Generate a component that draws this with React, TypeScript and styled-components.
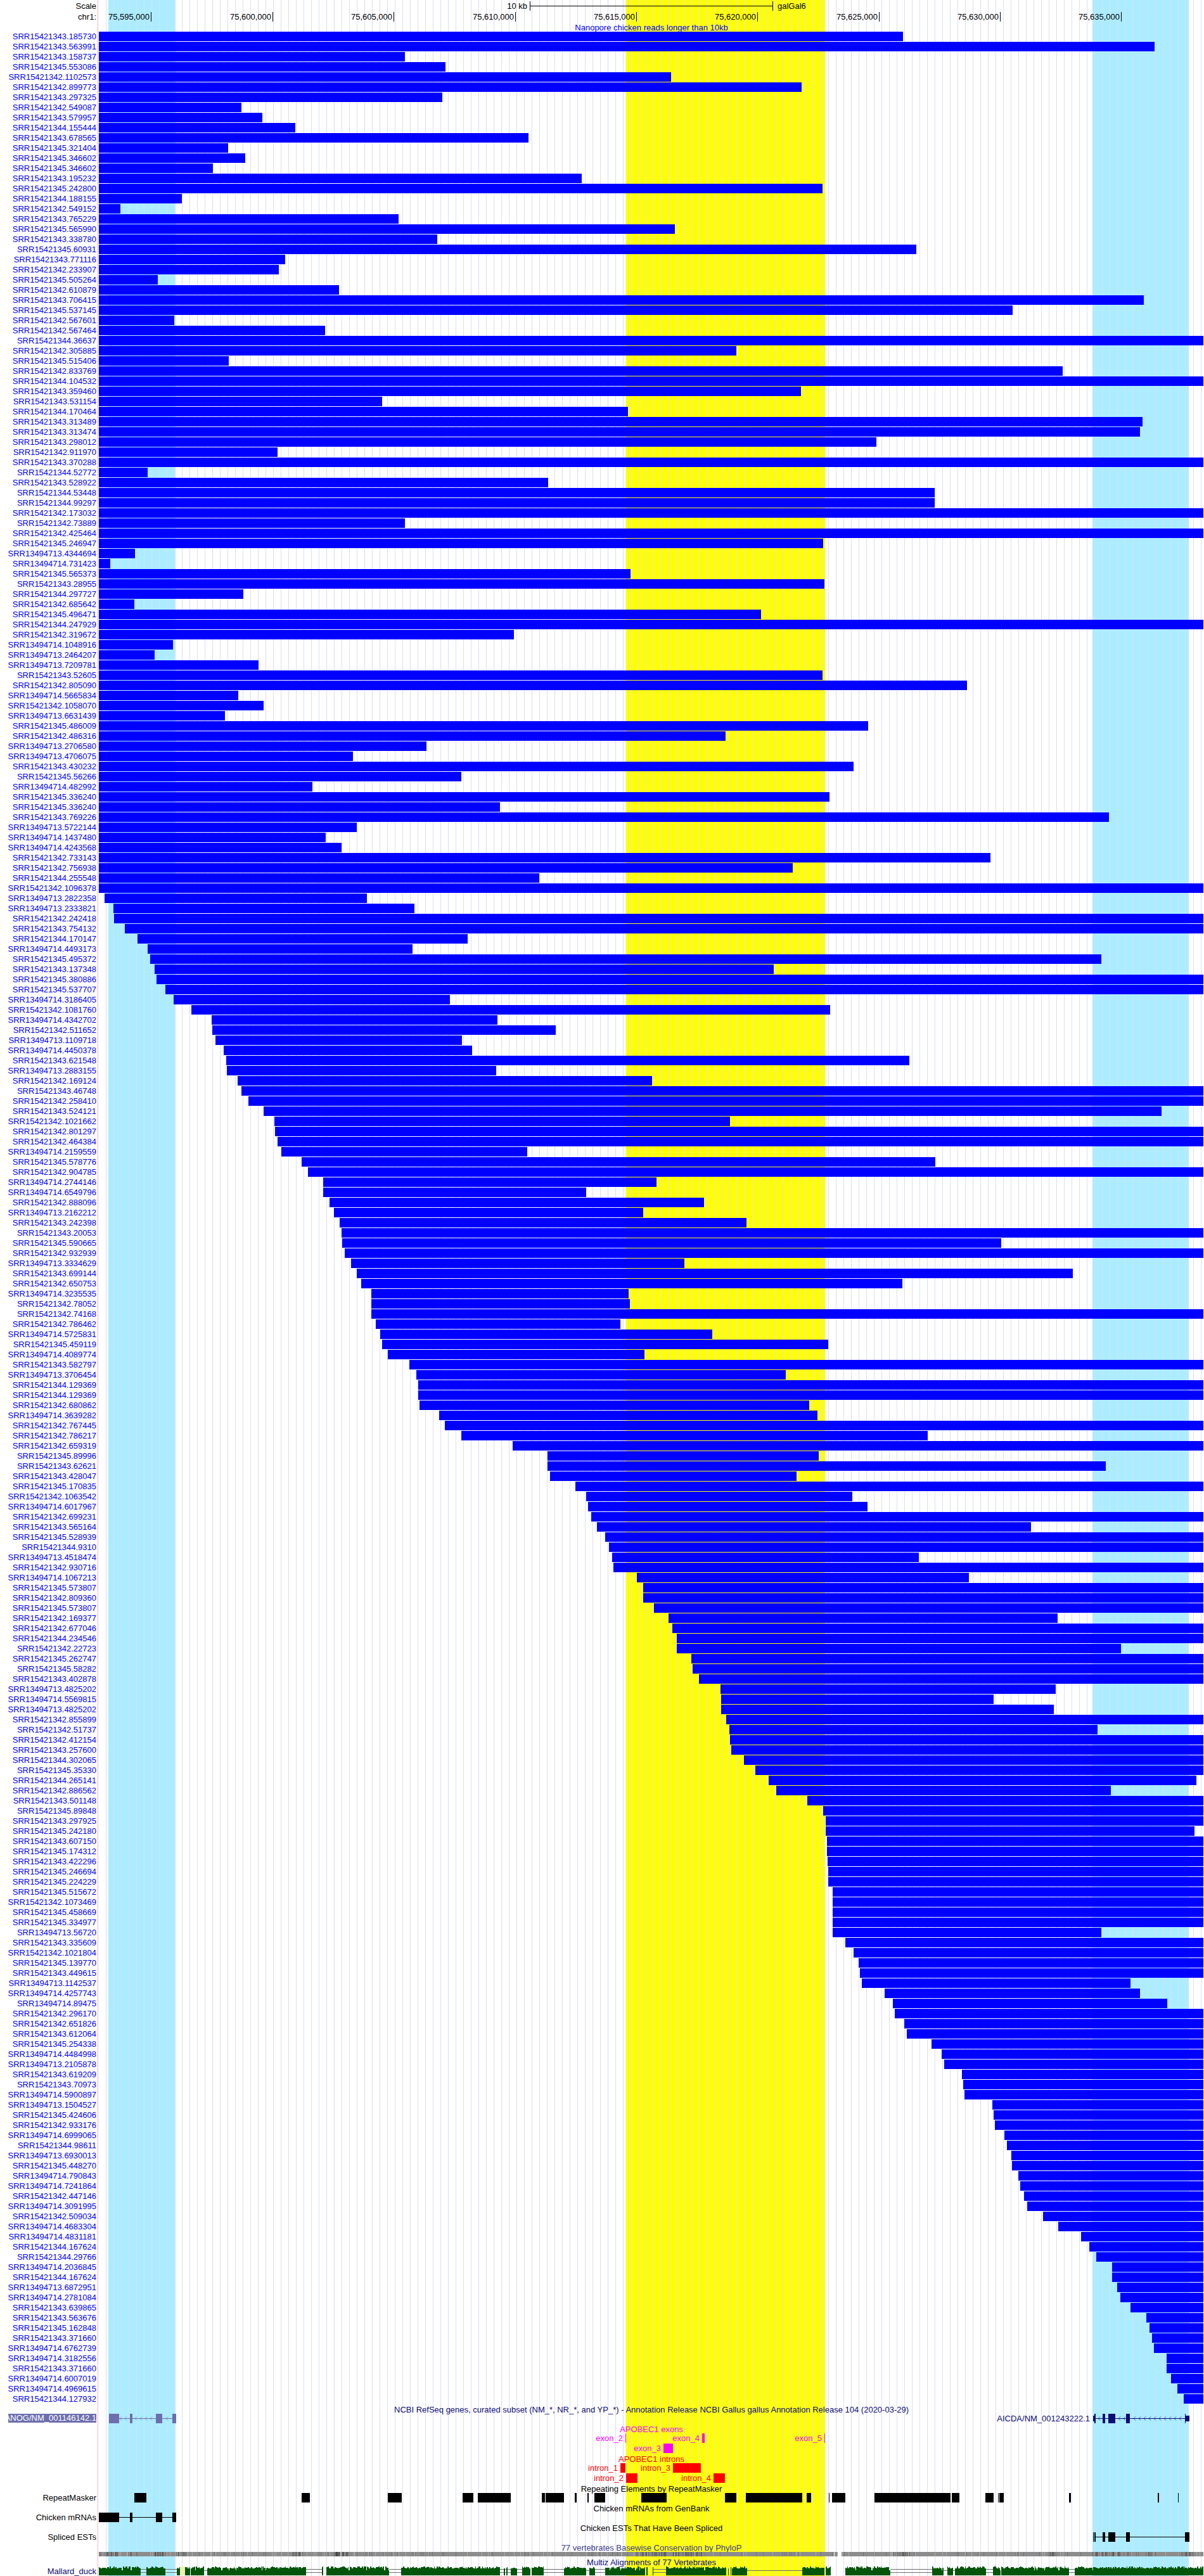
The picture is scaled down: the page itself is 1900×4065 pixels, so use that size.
import React from "react";
import styled, { createGlobalStyle } from "styled-components";

/* The plot is drawn on a 1744 unit wide axis that begins at unit 156. */
const AXIS_START = 156;
const AXIS_SPAN = 1744;
const AXIS_LAST = 1899;
/* Read extents are stored in coarser columns than the axis units. */
const READ_COLUMN = 1900 / 1568;

const percent = (x: number) => `${((x - AXIS_START) / AXIS_SPAN) * 100}%`;
const percentSpan = (w: number) => `${(w / AXIS_SPAN) * 100}%`;

const READS = `
SRR15421343.185730 0 1176
SRR15421343.563991 0 1504
SRR15421343.158737 0 527
SRR15421345.553086 0 580
SRR15421342.1102573 0 874
SRR15421342.899773 0 1044
SRR15421343.297325 0 576
SRR15421342.549087 0 314.4
SRR15421343.579957 0 341.7
SRR15421344.155444 0 384.6
SRR15421343.678565 0 688
SRR15421345.321404 0 297.1
SRR15421345.346602 0 319.4
SRR15421345.346602 0 277.3
SRR15421343.195232 0 758
SRR15421345.242800 0 1071
SRR15421344.188155 0 236.9
SRR15421342.549152 0 156.8
SRR15421343.765229 0 519
SRR15421345.565990 0 879
SRR15421343.338780 0 569.5
SRR15421345.60931 0 1193
SRR15421343.771116 0 371.4
SRR15421342.233907 0 363.1
SRR15421345.505264 0 205.5
SRR15421342.610879 0 441.5
SRR15421343.706415 0 1490
SRR15421345.537145 0 1319
SRR15421342.567601 0 227
SRR15421342.567464 0 423
SRR15421344.36637 0 1568
SRR15421342.305885 0 959
SRR15421345.515406 0 298
SRR15421342.833769 0 1384
SRR15421344.104532 0 1568
SRR15421343.359460 0 1043
SRR15421343.531154 0 498
SRR15421344.170464 0 818
SRR15421343.313489 0 1488
SRR15421343.313474 0 1485
SRR15421343.298012 0 1141
SRR15421342.911970 0 361.5
SRR15421343.370288 0 1568
SRR15421344.52772 0 192.3
SRR15421343.528922 0 714
SRR15421344.53448 0 1217
SRR15421344.99297 0 1217
SRR15421342.173032 0 1568
SRR15421342.73889 0 527
SRR15421342.425464 0 1568
SRR15421345.246947 0 1072
SRR13494713.4344694 0 175.8
SRR13494714.731423 0 143.6
SRR15421345.565373 0 821
SRR15421343.28955 0 1074
SRR15421344.297727 0 317
SRR15421342.685642 0 175
SRR15421345.496471 0 991
SRR15421344.247929 0 1568
SRR15421342.319672 0 669
SRR13494714.1048916 0 225.3
SRR13494713.2464207 0 201.4
SRR13494713.7209781 0 336.7
SRR15421343.52605 0 1071
SRR15421342.805090 0 1259
SRR13494714.5665834 0 310.3
SRR15421342.1058070 0 343.3
SRR13494713.6631439 0 293
SRR15421345.486009 0 1131
SRR15421342.486316 0 945
SRR13494713.2706580 0 555
SRR13494713.4706075 0 460
SRR15421343.430232 0 1112
SRR15421345.56266 0 601
SRR13494714.482992 0 407
SRR15421345.336240 0 1080
SRR15421345.336240 0 651
SRR15421343.769226 0 1444
SRR13494713.5722144 0 465
SRR13494714.1437480 0 424
SRR13494714.4243568 0 445
SRR15421342.733143 0 1290
SRR15421342.756938 0 1032
SRR15421344.255548 0 702
SRR15421342.1096378 0 1568
SRR13494713.2822358 136.2 478
SRR13494713.2333821 147.7 540
SRR15421342.242418 148.6 1568
SRR15421343.754132 162.6 1568
SRR15421344.170147 179.1 609
SRR13494714.4493173 192.3 537
SRR15421345.495372 195.6 1434
SRR15421343.137348 201.4 1008
SRR15421345.380886 203.8 1568
SRR15421345.537707 215.4 1568
SRR13494714.3186405 226.1 586
SRR15421342.1081760 249.2 1081
SRR13494714.4342702 275.6 648
SRR15421342.511652 276.5 724
SRR13494713.1109718 280.6 602
SRR13494714.4450378 291.3 615
SRR15421343.621548 294.6 1184
SRR13494713.2883155 295.5 646
SRR15421342.169124 309.5 849
SRR15421343.46748 314.4 1568
SRR15421342.258410 323.5 1568
SRR15421343.524121 343.3 1513
SRR15421342.1021662 357.3 951
SRR15421342.801297 358.2 1568
SRR15421342.464384 361.5 1568
SRR13494714.2159559 366.4 687
SRR15421345.578776 392.8 1218
SRR15421342.904785 401 1568
SRR13494714.2744146 421 855
SRR13494714.6549796 421 763
SRR15421342.888096 429 917
SRR13494713.2162212 435 838
SRR15421343.242398 442 972
SRR15421343.20053 445 1568
SRR15421345.590665 446 1304
SRR15421342.932939 449 1568
SRR13494713.3334629 457 891
SRR15421343.699144 465 1397
SRR15421342.650753 470 1175
SRR13494714.3235535 484 819
SRR15421342.78052 484 820
SRR15421342.74168 484 1568
SRR15421342.786462 489 808
SRR13494714.5725831 495 928
SRR15421345.459119 498 1079
SRR13494714.4089774 505 839
SRR15421343.582797 533 1568
SRR13494713.3706454 542 1023
SRR15421344.129369 545 1568
SRR15421344.129369 545 1568
SRR15421342.680862 546 1054
SRR13494714.3639282 572 1065
SRR15421342.767445 579 1568
SRR15421342.786217 601 1208
SRR15421342.659319 668 1568
SRR15421345.89996 713 1066
SRR15421343.62621 713 1440
SRR15421343.428047 716 1037
SRR15421345.170835 749 1568
SRR15421342.1063542 763 1110
SRR13494714.6017967 766 1130
SRR15421342.699231 770 1568
SRR15421343.565164 777 1343
SRR15421345.528939 788 1568
SRR15421344.9310 793 1568
SRR13494713.4518474 797 1197
SRR15421342.930716 799 1568
SRR13494714.1067213 829 1262
SRR15421345.573807 838 1568
SRR15421342.809360 838 1568
SRR15421345.573807 852 1568
SRR15421342.169377 871 1377
SRR15421342.677046 876 1568
SRR15421344.234546 881 1568
SRR15421342.22723 881 1460
SRR15421345.262747 900 1568
SRR15421345.58282 902 1568
SRR15421343.402878 910 1568
SRR13494713.4825202 938 1375
SRR13494714.5569815 939 1294
SRR13494713.4825202 939 1372
SRR15421342.855899 946 1568
SRR15421342.51737 950 1429
SRR15421342.412154 951 1568
SRR15421343.257600 952 1568
SRR15421344.302065 969 1568
SRR15421345.35330 984 1568
SRR15421344.265141 1001 1558
SRR15421342.886562 1011 1447
SRR15421343.501148 1051 1568
SRR15421345.89848 1072 1568
SRR15421343.297925 1075 1568
SRR15421345.242180 1075 1556
SRR15421343.607150 1077 1568
SRR15421345.174312 1077 1568
SRR15421343.422296 1078 1568
SRR15421345.246694 1079 1568
SRR15421345.224229 1079 1568
SRR15421345.515672 1084 1568
SRR15421342.1073469 1084 1568
SRR15421345.458669 1084 1568
SRR15421345.334977 1084 1568
SRR13494713.56720 1084 1434
SRR15421343.335609 1101 1568
SRR15421342.1021804 1112 1568
SRR15421345.139770 1118 1568
SRR15421343.449615 1120 1568
SRR13494713.1142537 1122 1472
SRR13494714.4257743 1152 1485
SRR13494714.89475 1163 1520
SRR15421342.296170 1165 1568
SRR15421342.651826 1178 1568
SRR15421343.612064 1181 1568
SRR15421345.254338 1213 1568
SRR13494714.4484998 1226 1568
SRR13494713.2105878 1230 1568
SRR15421343.619209 1253 1568
SRR15421343.70973 1254 1568
SRR13494714.5900897 1256 1568
SRR13494713.1504527 1292 1568
SRR15421345.424606 1294 1568
SRR15421342.933176 1296 1568
SRR13494714.6999065 1308 1568
SRR15421344.98611 1311 1568
SRR13494713.6930013 1317 1568
SRR15421345.448270 1318 1568
SRR13494714.790843 1326 1568
SRR13494714.7241864 1329 1568
SRR15421342.447146 1334 1568
SRR13494714.3091995 1338 1568
SRR15421342.509034 1358 1568
SRR13494714.4683304 1378 1568
SRR13494714.4831181 1408 1568
SRR15421344.167624 1419 1568
SRR15421344.29766 1428 1568
SRR13494714.2036845 1448 1568
SRR15421344.167624 1448 1568
SRR13494713.6872951 1455 1568
SRR13494714.2781084 1459 1568
SRR15421343.639865 1472 1568
SRR15421343.563676 1493 1568
SRR15421345.162848 1497 1568
SRR15421343.371660 1500 1568
SRR13494714.6762739 1503 1568
SRR13494714.3182556 1519 1568
SRR15421343.371660 1519 1568
SRR13494714.6007019 1525 1568
SRR13494714.4969615 1533 1568
SRR15421344.127932 1542 1568
`
  .trim()
  .split("\n")
  .map((line) => {
    const [name, from, to] = line.split(" ");
    return {
      name,
      from: Math.max(AXIS_START, Math.round(Number(from) * READ_COLUMN)),
      to: Math.min(AXIS_LAST, Math.round(Number(to) * READ_COLUMN)),
    };
  });

type Box = [from: number, to: number];

const TICKS: [number, string][] = [
  [238, "75,595,000"],
  [430, "75,600,000"],
  [621, "75,605,000"],
  [813, "75,610,000"],
  [1004, "75,615,000"],
  [1195, "75,620,000"],
  [1387, "75,625,000"],
  [1578, "75,630,000"],
  [1769, "75,635,000"],
];

const REPEATS: Box[] = [
  [212, 231], [476, 489], [612, 634], [730, 747], [754, 806], [855, 860],
  [861, 890], [907, 910], [927, 929], [938, 955], [1012, 1052], [1144, 1162],
  [1177, 1266], [1273, 1280], [1308, 1309], [1313, 1334], [1380, 1500],
  [1502, 1514], [1555, 1568], [1575, 1576], [1577, 1584], [1687, 1690],
  [1827, 1829], [1859, 1860],
];

const ALIGNED: Box[] = [
  [156, 222], [231, 261], [279, 284], [292, 300], [301, 322], [327, 483],
  [508, 510], [515, 614], [633, 789], [795, 797], [799, 801], [806, 816],
  [824, 837], [839, 858], [890, 925], [930, 939], [955, 1018], [1020, 1022],
  [1030, 1031], [1051, 1146], [1149, 1150], [1153, 1154], [1155, 1179],
  [1266, 1301], [1303, 1311], [1334, 1405], [1471, 1489], [1495, 1504],
  [1507, 1556], [1567, 1579], [1580, 1687], [1696, AXIS_LAST],
];

const DOUBLE_GAPS: Box[] = [
  [222, 231], [261, 279], [483, 508], [614, 633], [789, 806], [816, 824],
  [858, 890], [939, 955], [1031, 1051], [1405, 1471], [1556, 1567],
  [1687, 1696],
];
const SINGLE_GAPS: Box[] = [
  [322, 327], [925, 930], [1179, 1266], [1489, 1495], [1504, 1507],
];

/* Spans where the conservation strip carries many dark columns. */
const CONSERVED: Box[] = [
  [168, 188], [204, 209], [244, 262], [278, 300], [462, 476], [527, 552],
  [1005, 1052], [1062, 1110], [1200, 1206], [1408, 1436], [1655, 1667],
  [1724, 1768], [1776, 1792], [1812, 1824], [1864, 1884],
];

const NANOG: Box[] = [[172, 188], [205, 209], [246, 256], [272, 278]];
const AICDA: Box[] = [[1727, 1729], [1740, 1744], [1749, 1760], [1777, 1783], [1870, 1871]];
const MRNAS: Box[] = [[156, 188], [205, 209], [246, 256], [272, 278]];
const ESTS: Box[] = [[1725, 1726], [1727, 1729], [1740, 1744], [1749, 1760], [1777, 1783], [1870, 1877]];

const randomFrom = (seed: number) => {
  let state = seed;
  return () => {
    state = (state * 16807) % 2147483647;
    return state / 2147483647;
  };
};

const conservationColumns = () => {
  const random = randomFrom(77);
  const columns: { x: number; fill: string }[] = [];
  for (let x = AXIS_START; x < AXIS_LAST; x += 1) {
    const dense = CONSERVED.some(([a, b]) => x >= a && x < b);
    const draw = random();
    const tone = random();
    if (dense && draw < 0.5) {
      columns.push({ x, fill: tone < 0.2 ? "#464646" : tone < 0.6 ? "#646464" : "#787878" });
    } else if (draw < 0.06) {
      columns.push({ x, fill: "#747474" });
    } else if (draw > 0.93) {
      columns.push({ x, fill: "#aaaaaa" });
    }
  }
  return columns;
};

const alignmentPath = () => {
  const random = randomFrom(4065);
  let d = "";
  ALIGNED.forEach(([from, to]) => {
    d += `M${from} 14`;
    let x = from;
    while (x < to) {
      const next = Math.min(to, x + 1 + Math.floor(random() * 2));
      const draw = random();
      const top = draw < 0.03 ? 6 : draw < 0.3 ? 3 : draw < 0.6 ? 2 : draw < 0.85 ? 1 : 0;
      d += `V${top}H${next}`;
      x = next;
    }
    d += "V14Z";
  });
  return d;
};

const Reset = createGlobalStyle`
  body { margin: 0; background: #ffffff; }
`;

const Browser = styled.main`
  display: grid;
  font: 13px/15px "Liberation Sans", Arial, Helvetica, sans-serif;
  color: #000000;
`;

const band = (color: string, from: number, to: number) =>
  `transparent ${percent(from)}, ${color} ${percent(from)}, ${color} ${percent(to)}, transparent ${percent(to)}`;

const Backdrop = styled.div`
  grid-area: 1 / 1;
  margin-left: 154px;
  padding-left: 1px;
  border-left: 1px solid #ffb4b4;
  background-image:
    linear-gradient(to right, #dcdcff 1px, transparent 1px),
    linear-gradient(
      to right,
      ${band("#aaedff", 171, 277)},
      ${band("#ffff00", 988, 1302)},
      ${band("#aaedff", 1724, 1876)}
    );
  background-size: 12px 100%, 100% 100%;
  background-position: 11px 0, 0 0;
  background-repeat: repeat-x, no-repeat;
  background-origin: content-box;
  background-clip: content-box;
`;

const Tracks = styled.div`
  grid-area: 1 / 1;
  min-width: 0;
`;

const ReadList = styled.ul`
  margin: 0;
  padding: 0;
  list-style: none;
`;

const Row = styled.div<{ $height?: number }>`
  display: grid;
  grid-template-columns: 152px minmax(0, 1fr);
  column-gap: 4px;
  height: ${(p) => p.$height ?? 16}px;
`;

const ScaleRow = styled(Row)`
  box-sizing: border-box;
  padding-top: 2px;
`;

const Label = styled.span<{ $color?: string }>`
  text-align: right;
  white-space: nowrap;
  color: ${(p) => p.$color ?? "#000000"};
`;

const GeneTag = styled.span`
  display: flex;
  justify-content: flex-end;
  height: 14px;
  margin-left: 13px;
  line-height: 14px;
  overflow: hidden;
  white-space: nowrap;
  color: #ffffff;
  background: #6e6eaf;
`;

const Title = styled.h2<{ $color?: string }>`
  height: 15px;
  margin: 0 0 0 156px;
  font: inherit;
  line-height: 17px;
  text-align: center;
  white-space: nowrap;
  color: ${(p) => p.$color ?? "#000000"};
`;

const ReadBar = styled.div`
  height: 15px;
  background: #0000ff;
`;

const Canvas = styled.div`
  position: relative;
  height: 15px;
`;

const Plot = styled.svg`
  display: block;
  width: 100%;
  height: 15px;
`;

const StripClip = styled.div`
  height: 7px;
  overflow: hidden;
`;

const Feature = styled.span<{ $color: string }>`
  position: absolute;
  top: 0;
  height: 15px;
  background: ${(p) => p.$color};
`;

const FeatureName = styled.span<{ $color: string }>`
  position: absolute;
  top: 0;
  margin-right: 4px;
  white-space: nowrap;
  color: ${(p) => p.$color};
`;

const TickName = styled(FeatureName)`
  margin-right: 2px;
`;

const TickMark = styled(Feature)`
  width: 1px;
`;

const ScaleBar = styled.span`
  position: absolute;
  top: 0;
  height: 15px;
  box-sizing: border-box;
  border: solid #000000;
  border-width: 0 1px;
  background: linear-gradient(#000000, #000000) 0 7px / 100% 1px no-repeat;
`;

const UnitName = styled.span`
  position: absolute;
  top: 0;
  margin-left: 8px;
`;

const rightOf = (x: number) => ({ right: `calc(100% - ${percent(x)})` });
const spanOf = (from: number, to: number) => ({
  left: percent(from),
  width: percentSpan(to - from),
});

const Chart = ({ label, children }: { label: string; children: React.ReactNode }) => (
  <Plot
    role="img"
    aria-label={label}
    viewBox={`${AXIS_START} 0 ${AXIS_SPAN} 15`}
    preserveAspectRatio="none"
    shapeRendering="crispEdges"
  >
    {children}
  </Plot>
);

const Boxes = ({ boxes, y = 0, h = 15, fill }: { boxes: Box[]; y?: number; h?: number; fill: string }) => (
  <>
    {boxes.map(([a, b]) => (
      <rect key={a} x={a} y={y} width={b - a} height={h} fill={fill} />
    ))}
  </>
);

const Chevrons = ({ spans, stroke }: { spans: Box[]; stroke: string }) => {
  let d = "";
  spans.forEach(([a, b]) => {
    for (let x = a; x + 4 <= b; x += 8) d += `M${x + 3} 4.5L${x} 7.5L${x + 3} 10.5`;
  });
  return <path d={d} fill="none" stroke={stroke} strokeWidth="0.7" shapeRendering="auto" />;
};

type Named = [name: string, from: number, to: number];

const FeatureRow = ({ items, color }: { items: Named[]; color: string }) => (
  <Row>
    <Label />
    <Canvas>
      {items.map(([name, from, to]) => (
        <React.Fragment key={name}>
          <FeatureName $color={color} style={rightOf(from)}>{name}</FeatureName>
          <Feature $color={color} style={spanOf(from, to)} />
        </React.Fragment>
      ))}
    </Canvas>
  </Row>
);

export default function App() {
  return (
    <>
      <Reset />
      <Browser>
        <Backdrop />
        <Tracks>
          <ScaleRow $height={19}>
            <Label>Scale</Label>
            <Canvas>
              <FeatureName $color="#000000" style={rightOf(836)}>10 kb</FeatureName>
              <ScaleBar style={spanOf(836, 1220)} />
              <UnitName style={{ left: percent(1219) }}>galGal6</UnitName>
            </Canvas>
          </ScaleRow>
          <Row>
            <Label>chr1:</Label>
            <Canvas>
              {TICKS.map(([x, name]) => (
                <React.Fragment key={name}>
                  <TickName $color="#000000" style={rightOf(x)}>{name}</TickName>
                  <TickMark $color="#000000" style={{ left: percent(x) }} />
                </React.Fragment>
              ))}
            </Canvas>
          </Row>
          <Title $color="#0000ff">Nanopore chicken reads longer than 10kb</Title>

          <ReadList>
            {READS.map((read, i) => (
              <Row as="li" key={i}>
                <Label $color="#0000ff">{read.name}</Label>
                <ReadBar
                  style={{
                    marginLeft: percent(read.from),
                    width: percentSpan(read.to - read.from),
                  }}
                />
              </Row>
            ))}
          </ReadList>

          <Title $color="#0c0c78">
            NCBI RefSeq genes, curated subset (NM_*, NR_*, and YP_*) - Annotation Release NCBI Gallus gallus Annotation Release 104 (2020-03-29)
          </Title>
          <Row>
            <GeneTag>NANOG/NM_001146142.1</GeneTag>
            <Canvas>
              <Chart label="RefSeq genes">
                <Boxes boxes={[[188, 272]]} y={7} h={1} fill="#6e6eaf" />
                <Chevrons spans={[[189, 204], [213, 245], [262, 272]]} stroke="#6e6eaf" />
                <Boxes boxes={NANOG} fill="#6e6eaf" />
                <Boxes boxes={[[1727, 1871]]} y={7} h={1} fill="#0c0c78" />
                <Chevrons spans={[[1733, 1740], [1765, 1777], [1789, 1869]]} stroke="#0c0c78" />
                <Boxes boxes={AICDA} fill="#0c0c78" />
                <Boxes boxes={[[1725, 1727], [1871, 1877]]} y={3} h={9} fill="#0c0c78" />
              </Chart>
              <FeatureName $color="#0c0c78" style={rightOf(1724)}>AICDA/NM_001243222.1</FeatureName>
            </Canvas>
          </Row>

          <Title $color="#ff00ff">APOBEC1 exons</Title>
          <FeatureRow color="#ff00ff" items={[["exon_2", 987, 988], ["exon_4", 1108, 1112], ["exon_5", 1301, 1302]]} />
          <FeatureRow color="#ff00ff" items={[["exon_3", 1047, 1062]]} />

          <Title $color="#ff0000">APOBEC1 introns</Title>
          <FeatureRow color="#ff0000" items={[["intron_1", 979, 987], ["intron_3", 1062, 1106]]} />
          <FeatureRow color="#ff0000" items={[["intron_2", 988, 1006], ["intron_4", 1126, 1144]]} />

          <Title>Repeating Elements by RepeatMasker</Title>
          <Row>
            <Label>RepeatMasker</Label>
            <Chart label="Repeating elements">
              <Boxes boxes={REPEATS} fill="#000000" />
            </Chart>
          </Row>

          <Title>Chicken mRNAs from GenBank</Title>
          <Row>
            <Label>Chicken mRNAs</Label>
            <Chart label="Chicken mRNAs">
              <Boxes boxes={[[188, 272]]} y={7} h={1} fill="#000000" />
              <Boxes boxes={MRNAS} fill="#000000" />
            </Chart>
          </Row>

          <Title>Chicken ESTs That Have Been Spliced</Title>
          <Row>
            <Label>Spliced ESTs</Label>
            <Chart label="Spliced ESTs">
              <Boxes boxes={[[1727, 1871]]} y={7} h={1} fill="#000000" />
              <Boxes boxes={ESTS} fill="#000000" />
            </Chart>
          </Row>

          <Title $color="#3c3c8c">77 vertebrates Basewise Conservation by PhyloP</Title>
          <Row $height={8}>
            <Label />
            <StripClip>
              <Chart label="Basewise conservation">
                <Boxes boxes={[[AXIS_START, AXIS_LAST]]} h={7} fill="#8c8c8c" />
                {conservationColumns().map((c) => (
                  <rect key={c.x} x={c.x} y={0} width={1} height={7} fill={c.fill} />
                ))}
                <Boxes boxes={[[1316, 1317], [1322, 1328]]} h={7} fill="#ffffff" />
              </Chart>
            </StripClip>
          </Row>

          <Title $color="#0c0c78">Multiz Alignments of 77 Vertebrates</Title>
          <Row $height={15}>
            <Label $color="#0c0c78">Mallard_duck</Label>
            <Chart label="Mallard duck alignment">
              <Boxes boxes={DOUBLE_GAPS} y={4} h={1} fill="#6e6e6e" />
              <Boxes boxes={DOUBLE_GAPS} y={9} h={1} fill="#6e6e6e" />
              <Boxes boxes={SINGLE_GAPS} y={6} h={1} fill="#6e6e6e" />
              <Boxes boxes={[[284, 292]]} h={14} fill="#f0f0b4" />
              <path d={alignmentPath()} fill="#00550a" />
            </Chart>
          </Row>
        </Tracks>
      </Browser>
    </>
  );
}
